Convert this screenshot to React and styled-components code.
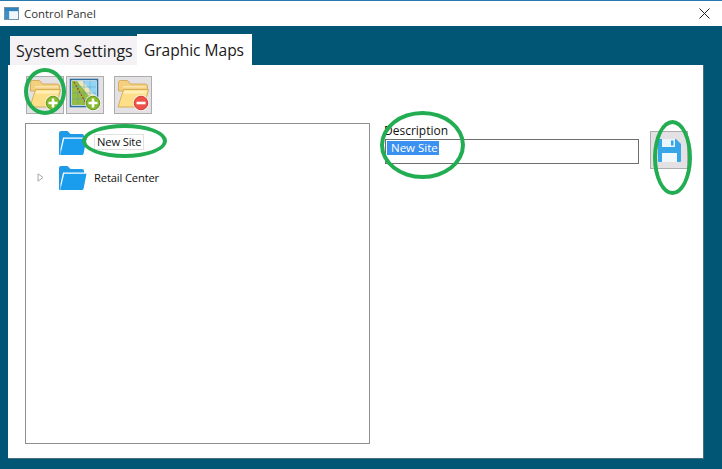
import React from "react";
import styled, { createGlobalStyle } from "styled-components";

const GlobalStyle = createGlobalStyle`
  html, body {
    margin: 0;
    padding: 0;
    background: #005674;
  }
  body {
    font-family: "Open Sans", "Noto Sans", sans-serif;
  }
`;

const Window = styled.div`
  position: relative;
  width: 722px;
  height: 469px;
  overflow: hidden;
  display: flex;
  flex-direction: column;
  background: #005674;
`;

const TitleBar = styled.div`
  height: 25px;
  flex: none;
  background: #fff;
  border-top: 1px solid #2b78ac;
  display: flex;
  align-items: center;
  padding: 0 12px 0 4px;
  gap: 5px;
  font-size: 11.4px;
  color: #333;
`;

const TitleText = styled.span`
  flex: 1;
  margin-top: -1px;
`;

const Body = styled.div`
  flex: 1;
  display: flex;
  flex-direction: column;
  padding: 8px 18px 10px 8px;
`;

const Tabs = styled.div`
  height: 31px;
  flex: none;
  display: flex;
  align-items: flex-end;
  padding-left: 2px;
`;

const Tab = styled.div`
  height: ${(p) => (p.$active ? "31px" : "29px")};
  width: ${(p) => (p.$active ? "115px" : "127px")};
  box-sizing: border-box;
  background: ${(p) => (p.$active ? "#fff" : "#f4f2f5")};
  color: #1a1a1a;
  font-size: ${(p) => (p.$active ? "15.6px" : "16px")};
  font-weight: 500;
  letter-spacing: -0.05px;
  line-height: ${(p) => (p.$active ? "32px" : "31px")};
  padding-left: ${(p) => (p.$active ? "7px" : "6px")};
  white-space: nowrap;
`;

const Panel = styled.div`
  flex: 1;
  display: flex;
  flex-direction: column;
  background: #fff;
  border-right: 1px solid #47707f;
  border-bottom: 1px solid #47707f;
  padding: 11px 15px 14px 17px;
  min-height: 0;
`;

const Toolbar = styled.div`
  display: flex;
  height: 38px;
  flex: none;
  margin-left: 1px;
`;

const ToolButton = styled.button`
  width: 38px;
  height: 38px;
  box-sizing: border-box;
  padding: 0;
  margin-left: ${(p) => p.$gap || 0}px;
  background: #e3e1e4;
  border: 1px solid #adadad;
  display: flex;
  align-items: center;
  justify-content: center;
`;

const Content = styled.div`
  flex: 1;
  display: flex;
  margin-top: 9px;
  min-height: 0;
`;

const Tree = styled.div`
  width: 345px;
  flex: none;
  box-sizing: border-box;
  border: 1px solid #8f8f8f;
  padding-top: 6px;
  display: flex;
  flex-direction: column;
  gap: 10px;
`;

const TreeRow = styled.div`
  height: 25px;
  display: flex;
  align-items: center;
  padding-left: 11px;
`;

const Arrow = styled.span`
  width: 21px;
  flex: none;
  display: flex;
`;

const TreeLabel = styled.span`
  margin-left: ${(p) => (p.$editing ? "7px" : "6px")};
  padding: 0 ${(p) => (p.$editing ? "2px" : "0")};
  height: 14px;
  line-height: 14px;
  font-size: 11.2px;
  font-weight: 500;
  color: #111;
  border: 1px solid ${(p) => (p.$editing ? "#e2e2e2" : "transparent")};
  letter-spacing: -0.15px;
  margin-top: ${(p) => (p.$editing ? "-2px" : "0")};
`;

const Details = styled.div`
  flex: 1;
  display: flex;
  align-items: flex-start;
  padding-left: 14px;
  padding-top: 8px;
  min-width: 0;
`;

const Field = styled.div`
  width: 255px;
  flex: none;
  display: flex;
  flex-direction: column;
  margin-top: -8px;
`;

const FieldLabel = styled.label`
  font-size: 12px;
  line-height: 15px;
  color: #111;
`;

const FieldBox = styled.div`
  height: 25px;
  box-sizing: border-box;
  margin-top: 1px;
  margin-left: 1px;
  border: 1px solid #6e6e6e;
  background: #fff;
  padding: 1px 0 0 1px;
`;

const Selected = styled.span`
  display: inline-block;
  background: #3b91f0;
  color: #fff;
  font-size: 11.5px;
  line-height: 14px;
  height: 14px;
  padding: 0 1px 0 4px;
  white-space: nowrap;
  vertical-align: top;
`;

const SaveButton = styled(ToolButton)`
  margin-left: 11px;
  flex: none;
`;

const Mark = styled.div`
  position: absolute;
  left: ${(p) => p.$x}px;
  top: ${(p) => p.$y}px;
  width: ${(p) => p.$w}px;
  height: ${(p) => p.$h}px;
  box-sizing: border-box;
  border: 4px solid #22ad52;
  border-radius: 50%;
  pointer-events: none;
`;

function WindowIcon() {
  return (
    <svg width="15" height="15" viewBox="0 0 15 15">
      <rect x="0.5" y="1.5" width="14" height="12" fill="#cfe3f2" stroke="#6f93ad" />
      <rect x="1" y="2" width="13" height="3" fill="#2f82bd" />
      <rect x="1" y="5" width="4" height="8" fill="#3d8fc6" />
      <rect x="6" y="6" width="8" height="7" fill="#f1f6fa" />
    </svg>
  );
}

function CloseIcon() {
  return (
    <svg width="11" height="11" viewBox="0 0 11 11">
      <path d="M0.5 0.5L10.5 10.5M10.5 0.5L0.5 10.5" stroke="#222" strokeWidth="1" fill="none" />
    </svg>
  );
}

function YellowFolder() {
  return (
    <>
      <path d="M3.5 5.5Q3.5 3.5 5.5 3.5H12.5L15.5 7H30Q32.5 7 32.5 9V14H3.5Z" fill="#f3d080" stroke="#d3a955" strokeWidth="0.9" />
      <path d="M8 9H31V10.5H8Z" fill="#fbe7ad" />
      <path d="M8.5 12.5H33.5L29 30H3Z" fill="#fcdf88" stroke="#d3a955" strokeWidth="0.9" />
      <path d="M9.5 13.8H31.8L31 16.5H8.5Z" fill="#ffefb8" />
    </>
  );
}

function Badge({ color, ring, minus }) {
  return (
    <>
      <circle cx="26" cy="26" r="8" fill="#fff" opacity="0.75" />
      <circle cx="26" cy="26" r="6.8" fill={color} stroke={ring} strokeWidth="0.9" />
      <path d={minus ? "M21.5 26H30.5" : "M21.5 26H30.5M26 21.5V30.5"} stroke="#fff" strokeWidth="2.6" fill="none" />
    </>
  );
}

function FolderAddIcon() {
  return (
    <svg width="36" height="36" viewBox="0 0 36 36">
      <YellowFolder />
      <Badge color="#84bb2a" ring="#5d8d18" />
    </svg>
  );
}

function FolderRemoveIcon() {
  return (
    <svg width="36" height="36" viewBox="0 0 36 36">
      <YellowFolder />
      <Badge color="#ee5146" ring="#c9362c" minus />
    </svg>
  );
}

function MapAddIcon() {
  return (
    <svg width="36" height="36" viewBox="0 0 36 36">
      <rect x="3.5" y="2.5" width="27" height="27" fill="#fff" stroke="#2b6f9e" strokeWidth="1.6" />
      <path d="M5 4H10L29 27V28H5Z" fill="#98bd3e" />
      <path d="M10 4H15L29 20V27Z" fill="#f2e6b4" />
      <path d="M15 4H29V20Z" fill="#93d4f5" />
      <path d="M5 10H29M5 16H29M5 22H29M11 4V28M17 4V28M23 4V28" stroke="#4f9cc4" strokeWidth="0.6" opacity="0.7" fill="none" />
      <path d="M7 5L20 28" stroke="#a8382a" strokeWidth="1.1" strokeDasharray="2 1.5" fill="none" />
      <Badge color="#84bb2a" ring="#5d8d18" />
    </svg>
  );
}

function BlueFolder() {
  return (
    <svg width="29" height="26" viewBox="0 0 29 26">
      <path d="M1 3Q1 1 3 1H9.5L12.5 4H24Q26 4 26 6V7.5H5L2.5 19V25H2Q1 25 1 24Z" fill="#1f9ae6" />
      <path d="M6.2 8.8H28.5L25.5 24Q25.2 25 24 25H3Q2.2 25 2.5 24Z" fill="#1b9ded" />
    </svg>
  );
}

function ExpandArrow() {
  return (
    <svg width="7" height="9" viewBox="0 0 7 9">
      <path d="M1 0.8L6 4.5L1 8.2Z" fill="#fff" stroke="#a8a8a8" strokeWidth="1" />
    </svg>
  );
}

function SaveIcon() {
  return (
    <svg width="25" height="25" viewBox="0 0 25 25">
      <path d="M1 2Q1 1 2 1H19L24 6V23Q24 24 23 24H2Q1 24 1 23Z" fill="#36a6e8" />
      <rect x="5" y="1" width="13" height="8" fill="#eaf5fc" />
      <rect x="14" y="2.5" width="2.5" height="5" fill="#36a6e8" />
      <rect x="5" y="15" width="15" height="9" fill="#eef8fd" />
    </svg>
  );
}

function App() {
  return (
    <Window>
      <GlobalStyle />
      <TitleBar>
        <WindowIcon />
        <TitleText>Control Panel</TitleText>
        <CloseIcon />
      </TitleBar>
      <Body>
        <Tabs>
          <Tab>System Settings</Tab>
          <Tab $active>Graphic Maps</Tab>
        </Tabs>
        <Panel>
          <Toolbar>
            <ToolButton><FolderAddIcon /></ToolButton>
            <ToolButton $gap={2}><MapAddIcon /></ToolButton>
            <ToolButton $gap={10}><FolderRemoveIcon /></ToolButton>
          </Toolbar>
          <Content>
            <Tree>
              <TreeRow>
                <Arrow />
                <BlueFolder />
                <TreeLabel $editing>New Site</TreeLabel>
              </TreeRow>
              <TreeRow>
                <Arrow><ExpandArrow /></Arrow>
                <BlueFolder />
                <TreeLabel>Retail Center</TreeLabel>
              </TreeRow>
            </Tree>
            <Details>
              <Field>
                <FieldLabel>Description</FieldLabel>
                <FieldBox><Selected>New Site</Selected></FieldBox>
              </Field>
              <SaveButton><SaveIcon /></SaveButton>
            </Details>
          </Content>
        </Panel>
      </Body>
      <Mark $x={24} $y={68} $w={42} $h={47} />
      <Mark $x={82} $y={124} $w={85} $h={34} />
      <Mark $x={380} $y={111} $w={85} $h={68} />
      <Mark $x={653} $y={120} $w={39} $h={75} />
    </Window>
  );
}

export default App;
